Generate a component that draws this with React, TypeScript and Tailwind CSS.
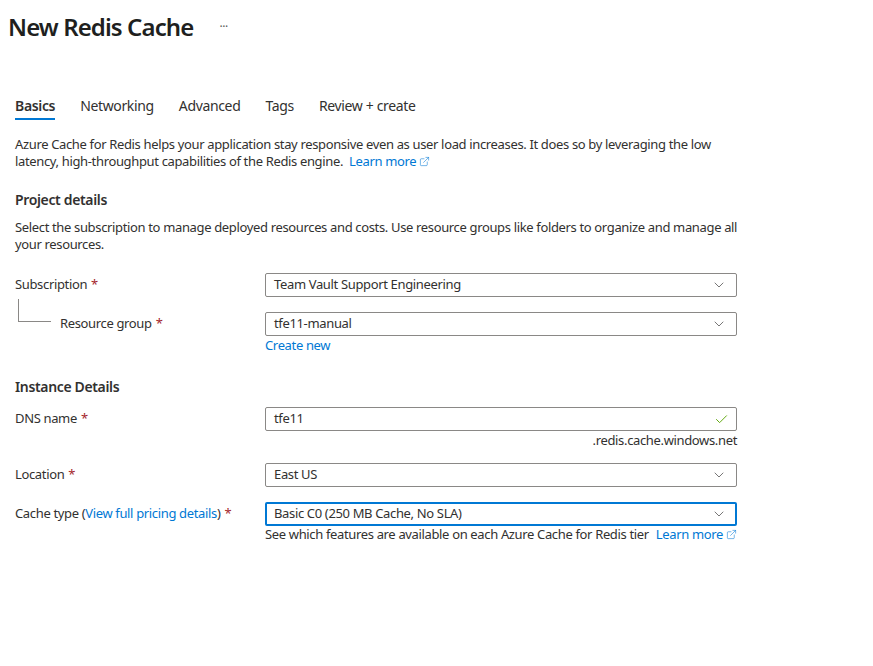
import { Check, ChevronDown, ExternalLink } from 'lucide-react'

const tabs = ['Basics', 'Networking', 'Advanced', 'Tags', 'Review + create']

function Req() {
  return <span className="text-[#a4262c] ml-1">*</span>
}

function Select({ value, focused }: { value: string; focused?: boolean }) {
  return (
    <div
      className={
        focused
          ? 'flex h-6 items-center justify-between rounded-[2px] border-2 border-[#0078d4] pl-[7px] pr-2'
          : 'flex h-6 items-center justify-between rounded-[2px] border border-[#8a8886] pl-2 pr-[9px]'
      }
    >
      <span>{value}</span>
      <ChevronDown size={16} strokeWidth={1} className="text-[#323130]" />
    </div>
  )
}

export default function App() {
  return (
    <div
      className="h-[666px] w-[873px] bg-white text-[13px] tracking-[-0.35px] text-[#323130]"
      style={{ fontFamily: '"Segoe UI", "Noto Sans", sans-serif' }}
    >
      <div className="flex items-center pl-2 pt-[12px]">
        <h1 className="text-[24px] font-semibold leading-[30px] tracking-[-0.9px] text-[#201f1e]">New Redis Cache</h1>
        <span className="ml-[26px] text-[12px] text-[#605e5c]">···</span>
      </div>

      <div className="mt-[54px] flex gap-[25px] pl-[15px] text-[14px]">
        {tabs.map((t, i) => (
          <div key={t} className="flex flex-col">
            <span className={i === 0 ? 'font-semibold leading-[20px]' : 'leading-[20px]'}>{t}</span>
            <div className={i === 0 ? 'mt-[2px] h-[2px] bg-[#0078d4]' : 'mt-[2px] h-[2px]'} />
          </div>
        ))}
      </div>

      <div className="px-[15px]">
        <p className="mt-[16px] w-[722px] leading-[17px]">
          Azure Cache for Redis helps your application stay responsive even as user load increases. It does so by
          leveraging the low latency, high-throughput capabilities of the Redis engine.
          <span className="ml-[6px] text-[#0078d4]">Learn more</span>
          <ExternalLink size={11} strokeWidth={1.2} className="ml-[3px] inline align-[-1px] text-[#0078d4]" />
        </p>

        <h2 className="mt-[20px] text-[14px] font-semibold leading-[20px]">Project details</h2>
        <p className="mt-[9px] w-[730px] leading-[17px]">
          Select the subscription to manage deployed resources and costs. Use resource groups like folders to organize
          and manage all your resources.
        </p>

        <div className="mt-[20px] grid grid-cols-[250px_472px] gap-y-[15px]">
          <div className="flex h-6 items-center">
            Subscription
            <Req />
          </div>
          <Select value="Team Vault Support Engineering" />

          <div className="relative flex h-6 items-center pl-[45px]">
            <div className="absolute left-[3px] top-[-13px] h-[23px] w-[33px] border-b border-l border-[#8a8886]" />
            Resource group
            <Req />
          </div>
          <div>
            <Select value="tfe11-manual" />
            <div className="mt-[1px] leading-[17px] text-[#0078d4]">Create new</div>
          </div>
        </div>

        <h2 className="mt-[23px] text-[14px] font-semibold leading-[20px]">Instance Details</h2>

        <div className="mt-[10px] grid grid-cols-[250px_472px] gap-y-[14px]">
          <div className="flex h-6 items-center">
            DNS name
            <Req />
          </div>
          <div>
            <div className="flex h-6 items-center justify-between rounded-[2px] border border-[#8a8886] pl-2 pr-[7px]">
              <span>tfe11</span>
              <Check size={15} strokeWidth={1.5} className="text-[#57a300]" />
            </div>
            <div className="mt-[1px] text-right leading-[17px]">.redis.cache.windows.net</div>
          </div>

          <div className="flex h-6 items-center">
            Location
            <Req />
          </div>
          <div className="pb-[1px]">
            <Select value="East US" />
          </div>

          <div className="flex h-6 items-center whitespace-nowrap">
            Cache type (<span className="text-[#0078d4]">View full pricing details</span>)
            <Req />
          </div>
          <div>
            <Select value="Basic C0 (250 MB Cache, No SLA)" focused />
            <div className="flex items-center whitespace-nowrap leading-[17px]">
              See which features are available on each Azure Cache for Redis tier
              <span className="ml-[7px] text-[#0078d4]">Learn more</span>
              <ExternalLink size={11} strokeWidth={1.2} className="ml-[3px] text-[#0078d4]" />
            </div>
          </div>
        </div>
      </div>
    </div>
  )
}
